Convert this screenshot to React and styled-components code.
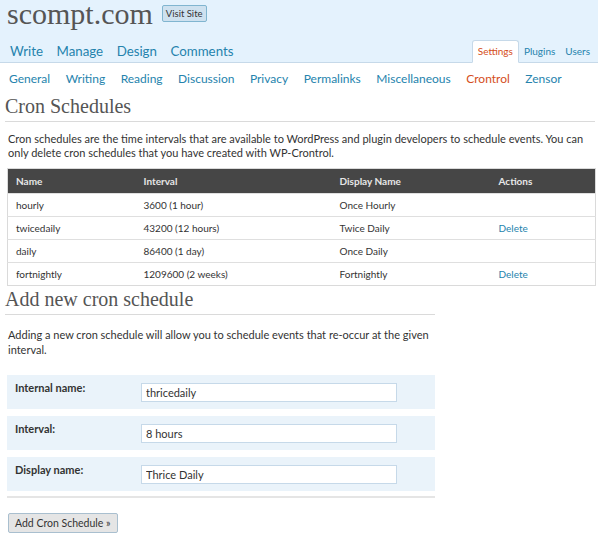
import React from 'react';
import styled, { createGlobalStyle } from 'styled-components';

const Global = createGlobalStyle`
  body {
    margin: 0;
    background: #fff;
    font-family: Lato, "Open Sans", sans-serif;
    color: #333;
  }
`;

const schedules = [
  { name: 'hourly', interval: '3600 (1 hour)', display: 'Once Hourly', del: false },
  { name: 'twicedaily', interval: '43200 (12 hours)', display: 'Twice Daily', del: true },
  { name: 'daily', interval: '86400 (1 day)', display: 'Once Daily', del: false },
  { name: 'fortnightly', interval: '1209600 (2 weeks)', display: 'Fortnightly', del: true },
];

const fields = [
  { label: 'Internal name:', value: 'thricedaily' },
  { label: 'Interval:', value: '8 hours' },
  { label: 'Display name:', value: 'Thrice Daily' },
];

const subPages = ['General', 'Writing', 'Reading', 'Discussion', 'Privacy', 'Permalinks', 'Miscellaneous'];

const App = () => {
  return (
    <Page>
      <Global />
      <Header>
        <TitleRow>
          <SiteName>scompt.com</SiteName>
          <VisitButton>Visit Site</VisitButton>
        </TitleRow>
        <NavRow>
          <MainNav>
            <a>Write</a>
            <a>Manage</a>
            <a>Design</a>
            <a>Comments</a>
          </MainNav>
          <SideNav>
            <Tab $active>Settings</Tab>
            <Tab>Plugins</Tab>
            <Tab>Users</Tab>
          </SideNav>
        </NavRow>
      </Header>

      <SubNav>
        {subPages.map((s) => (
          <SubLink key={s}>{s}</SubLink>
        ))}
        <SubLink $active>Crontrol</SubLink>
        <SubLink>Zensor</SubLink>
      </SubNav>

      <Wrap>
        <Heading>Cron Schedules</Heading>
        <Intro>
          Cron schedules are the time intervals that are available to WordPress and plugin developers to schedule events. You can
          only delete cron schedules that you have created with WP-Crontrol.
        </Intro>

        <Table>
          <colgroup>
            <col style={{ width: 128 }} />
            <col style={{ width: 196 }} />
            <col style={{ width: 159 }} />
            <col />
          </colgroup>
          <thead>
            <tr>
              <th>Name</th>
              <th>Interval</th>
              <th>Display Name</th>
              <th>Actions</th>
            </tr>
          </thead>
          <tbody>
            {schedules.map((s) => (
              <tr key={s.name}>
                <td>{s.name}</td>
                <td>{s.interval}</td>
                <td>{s.display}</td>
                <td>{s.del && <DeleteLink>Delete</DeleteLink>}</td>
              </tr>
            ))}
          </tbody>
        </Table>

        <Heading $narrow>Add new cron schedule</Heading>
        <Intro $form>
          Adding a new cron schedule will allow you to schedule events that re-occur at the given interval.
        </Intro>
        <FormTable>
          {fields.map((f) => (
            <FieldRow key={f.label}>
              <FieldLabel>{f.label}</FieldLabel>
              <FieldInput defaultValue={f.value} />
            </FieldRow>
          ))}
        </FormTable>
        <SubmitButton>Add Cron Schedule »</SubmitButton>
      </Wrap>
    </Page>
  );
};

export default App;

const Page = styled.div`
  width: 600px;
  height: 540px;
  overflow: hidden;
`;

const Header = styled.div`
  width: 598px;
  height: 62px;
  background: #e4f2fd;
  border-bottom: 1px solid #c6d9e9;
  display: flex;
  flex-direction: column;
  justify-content: space-between;
`;

const TitleRow = styled.div`
  display: flex;
  align-items: flex-start;
  padding-left: 7px;
  gap: 9px;
`;

const SiteName = styled.h1`
  margin: 0;
  font-family: "Liberation Serif", "Times New Roman", serif;
  font-weight: normal;
  font-size: 30px;
  line-height: 28px;
  color: #555;
`;

const VisitButton = styled.span`
  margin-top: 5px;
  height: 15px;
  padding: 0 3px;
  font-size: 9.5px;
  line-height: 15px;
  color: #333;
  background: #cee1ef;
  border: 1px solid #80b5d0;
  border-radius: 2px;
`;

const NavRow = styled.div`
  display: flex;
  justify-content: space-between;
  align-items: flex-end;
`;

const MainNav = styled.div`
  display: flex;
  gap: 13.5px;
  padding: 0 0 3px 10px;
  a {
    font-size: 13.3px;
    line-height: 16px;
    color: #2583ad;
  }
`;

const SideNav = styled.div`
  display: flex;
  align-items: flex-end;
  margin-bottom: -1px;
  padding-right: 3px;
`;

const Tab = styled.a`
  font-size: 10px;
  line-height: 14px;
  padding: ${(p) => (p.$active ? '3px 5px 4px' : '4px 5px 5px')};
  color: ${(p) => (p.$active ? '#d54e21' : '#2583ad')};
  background: ${(p) => (p.$active ? '#fff' : 'transparent')};
  border: ${(p) => (p.$active ? '1px solid #c6d9e9' : 'none')};
  border-bottom-color: #fff;
  border-radius: 3px 3px 0 0;
`;

const SubNav = styled.div`
  display: flex;
  gap: 15.5px;
  padding: 8px 0 0 9px;
  height: 23px;
`;

const SubLink = styled.a`
  font-size: 12px;
  line-height: 16px;
  color: ${(p) => (p.$active ? '#d54e21' : '#2583ad')};
`;

const Wrap = styled.div`
  padding: 0 5px;
`;

const Heading = styled.h2`
  margin: ${(p) => (p.$narrow ? '1px 0 0' : '0')};
  width: ${(p) => (p.$narrow ? '430px' : '590px')};
  font-family: "Liberation Serif", "Times New Roman", serif;
  font-weight: normal;
  font-size: 20px;
  line-height: 24px;
  color: #555;
  padding-bottom: 3px;
  border-bottom: 1px solid #dadada;
`;

const Intro = styled.p`
  margin: ${(p) => (p.$form ? '12px 0 18px 3px' : '10px 0 8px 3px')};
  width: ${(p) => (p.$form ? '428px' : '588px')};
  font-size: 11px;
  line-height: ${(p) => (p.$form ? '15px' : '14px')};
  color: #333;
`;

const Table = styled.table`
  margin-left: 2px;
  width: 589px;
  table-layout: fixed;
  border-collapse: collapse;
  border: 1px solid #dadada;
  font-size: 10px;
  th {
    background: #464646;
    color: #e6e6e6;
    text-align: left;
    font-weight: bold;
    height: 24px;
    padding: 0 8px;
  }
  td {
    height: 22px;
    padding: 0 8px;
    color: #333;
    border-top: 1px solid #dfdfdf;
  }
`;

const DeleteLink = styled.a`
  color: #2583ad;
`;

const FormTable = styled.div`
  margin-left: 2px;
  width: 428px;
  display: flex;
  flex-direction: column;
  gap: 7px;
  padding-bottom: 5px;
  border-bottom: 2px solid #e5e5e5;
`;

const FieldRow = styled.div`
  height: 34px;
  background: #eaf3fa;
  display: flex;
  align-items: flex-start;
`;

const FieldLabel = styled.label`
  width: 126px;
  padding: 6px 0 0 8px;
  font-size: 11px;
  line-height: 14px;
  font-weight: bold;
  color: #333;
`;

const FieldInput = styled.input`
  margin-top: 8px;
  width: 256px;
  height: 19px;
  box-sizing: border-box;
  padding: 0 4px;
  border: 1px solid #c6d9e9;
  font-family: Lato, "Open Sans", sans-serif;
  font-size: 11px;
  color: #333;
  background: #fff;
  outline: none;
`;

const SubmitButton = styled.button`
  margin: 15px 0 0 3px;
  height: 20px;
  padding: 0 6px;
  font-family: Lato, "Open Sans", sans-serif;
  font-size: 10.5px;
  color: #333;
  background: #e5e5e5;
  border: 1px solid #a9bfcf;
  border-radius: 2px;
`;
